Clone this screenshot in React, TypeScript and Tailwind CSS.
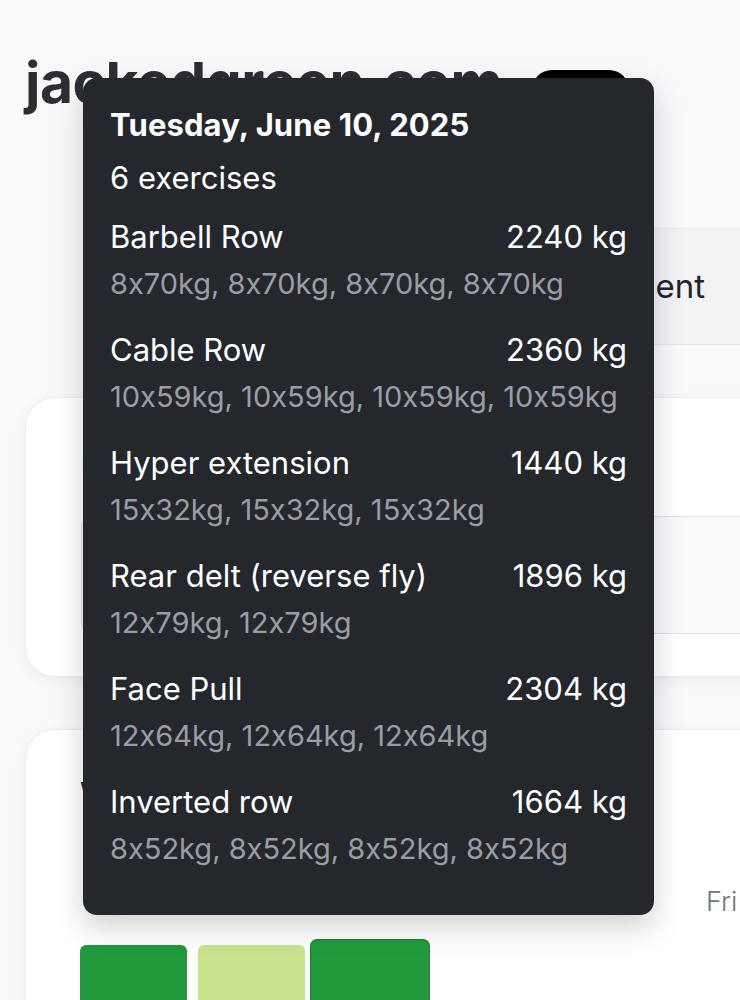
import React from 'react';

type Exercise = { name: string; total: string; sets: string };

const exercises: Exercise[] = [
  { name: 'Barbell Row', total: '2240 kg', sets: '8x70kg, 8x70kg, 8x70kg, 8x70kg' },
  { name: 'Cable Row', total: '2360 kg', sets: '10x59kg, 10x59kg, 10x59kg, 10x59kg' },
  { name: 'Hyper extension', total: '1440 kg', sets: '15x32kg, 15x32kg, 15x32kg' },
  { name: 'Rear delt (reverse fly)', total: '1896 kg', sets: '12x79kg, 12x79kg' },
  { name: 'Face Pull', total: '2304 kg', sets: '12x64kg, 12x64kg, 12x64kg' },
  { name: 'Inverted row', total: '1664 kg', sets: '8x52kg, 8x52kg, 8x52kg, 8x52kg' },
];

function Tooltip() {
  return (
    <div className="absolute left-[83px] top-[78px] w-[571px] rounded-[14px] bg-[#24272c] px-[27px] pt-[28px] pb-[48px] text-white shadow-[0_12px_30px_rgba(0,0,0,0.18)] font-['Inter',sans-serif] [font-variant-ligatures:no-contextual]">
      <div className="text-[31px] font-bold leading-[38px] tracking-[0.1px]">Tuesday, June 10, 2025</div>
      <div className="mt-[15px] text-[31px] leading-[38px]">6 exercises</div>
      <div className="mt-[1px] flex flex-col gap-[9px]">
        {exercises.map((ex) => (
          <div key={ex.name} className="pt-[20px]">
            <div className="flex items-center justify-between text-[31px] leading-[38px]">
              <span>{ex.name}</span>
              <span>{ex.total}</span>
            </div>
            <div className="mt-[10px] text-[29px] leading-[36px] text-[#9a9ea4]">{ex.sets}</div>
          </div>
        ))}
      </div>
    </div>
  );
}

export default function App() {
  return (
    <div className="relative h-[1000px] w-[740px] overflow-hidden bg-[#f8f9fa] font-['Inter',sans-serif] text-[#212529]">
      {/* header */}
      <div className="flex items-center gap-[30px] pl-[25px] pt-[50px]">
        <h1 className="text-[57px] font-bold leading-[66px] tracking-[-0.5px] text-[#2b2f33]">jackedgreen.com</h1>
        <div className="mt-[14px] h-[40px] w-[97px] rounded-full bg-black" />
      </div>

      {/* tabs */}
      <div className="ml-[200px] mt-[112px] flex h-[117px] w-[600px] items-center justify-end border-y border-[#e6e8eb] bg-[#f2f3f5] pr-[95px]">
        <span className="text-[33px] text-[#212529]">Equipment</span>
      </div>

      {/* card 1 */}
      <div className="ml-[25px] mt-[52px] h-[280px] w-[760px] rounded-[30px] border border-[#eceef0] bg-white pl-[55px] pt-[48px] shadow-[0_4px_14px_rgba(0,0,0,0.05)]">
        <div className="text-[28px] font-semibold leading-[34px] text-[#c9cdd2]">Date</div>
        <div className="mt-[36px] h-[118px] rounded-[10px] border border-[#dee2e6] bg-[#f8f9fa]" />
      </div>

      {/* card 2 */}
      <div className="ml-[25px] mt-[52px] h-[320px] w-[760px] rounded-[30px] border border-[#eceef0] bg-white pl-[54px] pt-[46px] shadow-[0_4px_14px_rgba(0,0,0,0.05)]">
        <div className="text-[30px] font-semibold leading-[34px] text-[#212529]">Weekly volume</div>
        <div className="mt-[72px] flex justify-end pr-[22px] text-[27px] font-light text-[#6c757d]">
          <span className="w-[56px]">Fri</span>
        </div>
        <div className="mt-[17px] flex items-start gap-[8px]">
          <div className="mt-[5px] h-[80px] w-[107px] rounded-[6px] bg-[#22993c]" />
          <div className="ml-[3px] mt-[5px] h-[80px] w-[107px] rounded-[6px] bg-[#c8e38c]" />
          <div className="-ml-[2px] h-[85px] w-[118px] rounded-[6px] bg-[#22993c] ring-1 ring-[#1a7d31]" />
        </div>
      </div>

      <Tooltip />
    </div>
  );
}
